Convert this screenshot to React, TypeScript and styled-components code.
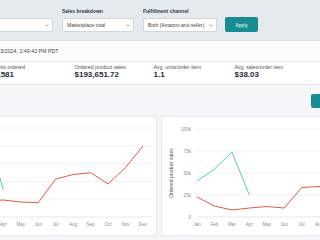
import React from 'react'
import styled, { createGlobalStyle } from 'styled-components'

const GlobalStyle = createGlobalStyle`
  html, body {
    margin: 0;
    padding: 0;
    overflow: hidden;
    background: #f5f6fa;
  }
  body {
    font-family: 'Liberation Sans', Arial, sans-serif;
  }
`

const Page = styled.div`
  width: 488px;
  margin-left: -85px;
  background: #f5f6fa;
  color: #232f3e;
`

const FilterBar = styled.div`
  display: flex;
  align-items: flex-end;
  gap: 9px;
  padding: 8px 0 8px 66px;
  background: #e4eaee;
  border-bottom: 1px solid #dbe1e5;
`

const Filter = styled.div`
  display: flex;
  flex-direction: column;
  gap: 3px;
`

const FilterLabel = styled.span`
  font-size: 5px;
  line-height: 7px;
  font-weight: 700;
  color: #2f3a44;
`

const Select = styled.div<{ $w: number }>`
  width: ${(p) => p.$w}px;
  height: 14px;
  box-sizing: border-box;
  display: flex;
  align-items: center;
  justify-content: space-between;
  padding: 0 3px 0 4px;
  background: #fff;
  border: 1px solid #cfd7dc;
  border-radius: 2px;
  font-size: 5px;
  color: #3a3f44;
`

const ApplyButton = styled.button`
  width: 33px;
  height: 15px;
  margin-left: -1px;
  padding: 0;
  border: none;
  border-radius: 2px;
  background: #178c92;
  color: #fff;
  font-family: inherit;
  font-size: 5px;
`

const Stamp = styled.div`
  height: 20px;
  display: flex;
  align-items: center;
  padding-left: 75px;
  background: #fcfcfd;
  font-size: 5.3px;
  color: #444;
`

const Metrics = styled.div`
  display: grid;
  grid-template-columns: 80.5px 79px 81px 80px;
  padding: 2px 0 5px 79px;
  background: #fff;
  border-top: 1px solid #e7e9ec;
  border-bottom: 1px solid #e7e9ec;
`

const Metric = styled.div`
  display: flex;
  flex-direction: column;
`

const MetricLabel = styled.span`
  font-size: 5.2px;
  line-height: 6px;
  color: #555;
`

const MetricValue = styled.span`
  font-size: 8px;
  line-height: 9px;
  font-weight: 700;
  color: #232f3e;
`

const Toolbar = styled.div`
  display: flex;
  justify-content: flex-end;
  padding: 9px 0 8px;
`

const ToggleButton = styled.button`
  width: 92px;
  height: 14px;
  padding: 0;
  border: none;
  border-radius: 2px;
  background: #178c92;
  color: #fff;
  font-family: inherit;
  font-size: 5px;
`

const Charts = styled.div`
  display: grid;
  grid-template-columns: 242px 242px;
  gap: 4px;
  padding-bottom: 6px;
`

const ChartCard = styled.div`
  height: 120px;
  box-sizing: border-box;
  background: #fff;
  border: 1px solid #e6e8ec;
`

const Chevron = () => (
  <svg width="4" height="3" viewBox="0 0 4 3">
    <polyline points="0.4,0.6 2,2.2 3.6,0.6" fill="none" stroke="#666" strokeWidth="0.6" />
  </svg>
)

const months = ['Jan', 'Feb', 'Mar', 'Apr', 'May', 'Jun', 'Jul', 'Aug', 'Sep', 'Oct', 'Nov', 'Dec']

type Series = { color: string; values: number[] }

type ChartProps = {
  title: string
  ticks: string[]
  max: number
  top: number
  series: Series[]
}

const LineChart: React.FC<ChartProps> = ({ title, ticks, max, top, series }) => {
  const left = 36
  const right = 237
  const base = 101
  const step = 17.45
  const y = (v: number) => base - (v / max) * (base - top)
  const tickGap = (base - top) / (ticks.length - 1)

  return (
    <svg width="240" height="118" viewBox="0 0 240 118">
      <g transform="translate(-1,-1)">
        {ticks.map((t, i) => {
          const ty = base - i * tickGap
          return (
            <g key={t}>
              <line x1={left} x2={right} y1={ty} y2={ty} stroke={i === 0 ? '#dfe1e6' : '#eeeff3'} strokeWidth="0.8" />
              <text x={30} y={ty + 1.6} textAnchor="end" fontSize="4.6" fill="#8a8d93">
                {t}
              </text>
            </g>
          )
        })}
        <text
          x={12}
          y={57}
          transform="rotate(-90 12 57)"
          textAnchor="middle"
          fontSize="5"
          fill="#555"
        >
          {title}
        </text>
        {months.map((m, i) => (
          <text key={m} x={left + i * step} y={109.5} textAnchor="middle" fontSize="4.6" fill="#8a8d93">
            {m}
          </text>
        ))}
        {series.map((s) => (
          <polyline
            key={s.color}
            points={s.values.map((v, i) => `${left + i * step},${y(v)}`).join(' ')}
            fill="none"
            stroke={s.color}
            strokeWidth="0.9"
            strokeLinejoin="round"
          />
        ))}
      </g>
    </svg>
  )
}

const RED = '#e2452f'
const CYAN = '#3ec3d0'

const App: React.FC = () => {
  return (
    <Page>
      <GlobalStyle />
      <FilterBar>
        <Filter>
          <FilterLabel>Date</FilterLabel>
          <Select $w={72}>
            <span>Today</span>
            <Chevron />
          </Select>
        </Filter>
        <Filter>
          <FilterLabel>Sales breakdown</FilterLabel>
          <Select $w={72}>
            <span>Marketplace total</span>
            <Chevron />
          </Select>
        </Filter>
        <Filter>
          <FilterLabel>Fulfillment channel</FilterLabel>
          <Select $w={74}>
            <span>Both (Amazon and seller)</span>
            <Chevron />
          </Select>
        </Filter>
        <ApplyButton>Apply</ApplyButton>
      </FilterBar>

      <Stamp>10/23/2024, 2:49:42 PM PDT</Stamp>

      <Metrics>
        <Metric>
          <MetricLabel>Units ordered</MetricLabel>
          <MetricValue>5,581</MetricValue>
        </Metric>
        <Metric>
          <MetricLabel>Ordered product sales</MetricLabel>
          <MetricValue>$193,651.72</MetricValue>
        </Metric>
        <Metric>
          <MetricLabel>Avg. units/order item</MetricLabel>
          <MetricValue>1.1</MetricValue>
        </Metric>
        <Metric>
          <MetricLabel>Avg. sales/order item</MetricLabel>
          <MetricValue>$38.03</MetricValue>
        </Metric>
      </Metrics>

      <Toolbar>
        <ToggleButton>Show table</ToggleButton>
      </Toolbar>

      <Charts>
        <ChartCard>
          <LineChart
            title="Units ordered"
            ticks={['0', '500', '1k', '1.5k', '2k', '2.5k']}
            max={2500}
            top={12}
            series={[
              { color: CYAN, values: [1573, 1854, 2472, 758] },
              { color: RED, values: [590, 506, 449, 477, 421, 402, 1067, 1194, 1244, 927, 1390, 1994] },
            ]}
          />
        </ChartCard>
        <ChartCard>
          <LineChart
            title="Ordered product sales"
            ticks={['0', '25k', '50k', '75k', '100k']}
            max={100}
            top={13}
            series={[
              { color: CYAN, values: [40.9, 54.5, 73.9, 25] },
              { color: RED, values: [22.7, 12.5, 8, 10.2, 11.9, 10.2, 33.5, 34.7, 36, 28, 42, 55] },
            ]}
          />
        </ChartCard>
      </Charts>
    </Page>
  )
}

export default App
